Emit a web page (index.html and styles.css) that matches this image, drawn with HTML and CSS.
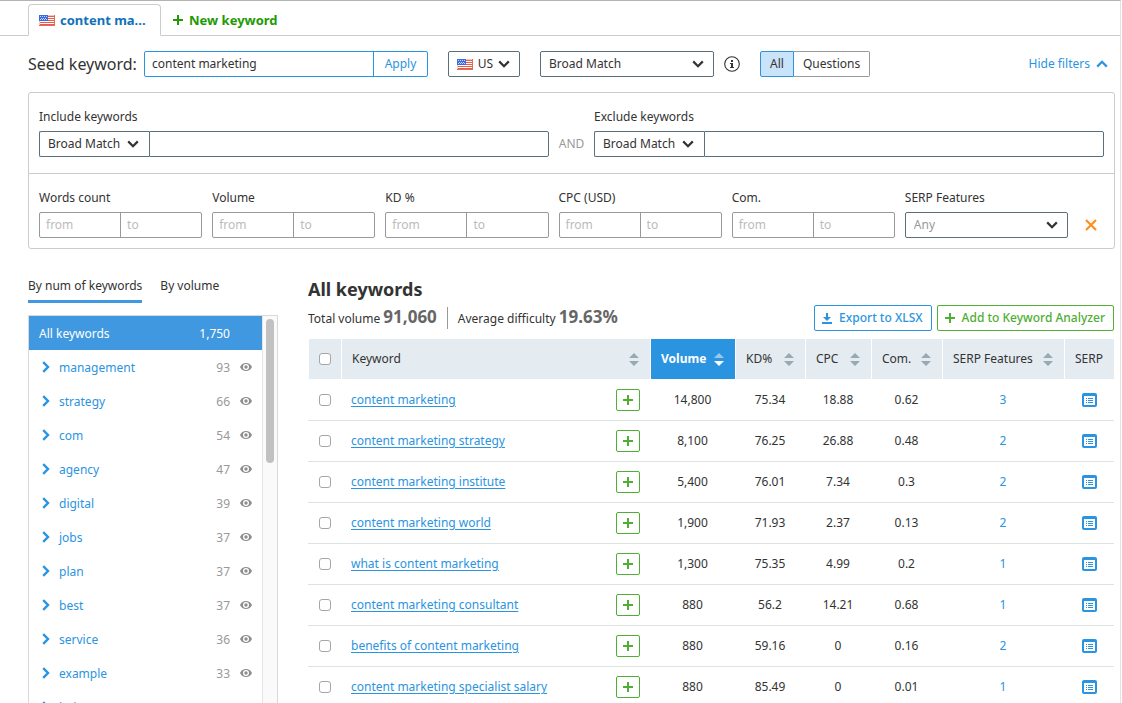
FILE: index.html
```html
<!DOCTYPE html>
<html lang="en">
<head>
  <meta charset="UTF-8">
  <title>Keyword Magic Tool</title>
  <link rel="stylesheet" href="styles.css">
</head>
<body>
  <!-- icons -->
  <svg class="sprite" aria-hidden="true">
    <symbol id="flag-us" viewBox="0 0 16 11">
      <path fill="#f4c9c2" d="M0 0h16v11H0z"/>
      <path fill="#fff" d="M1 1h14v9H1z"/>
      <path fill="#ee5a48" d="M1 1h14v1H1zM1 3h14v1H1zM1 5h14v1H1zM1 7h14v1H1zM1 9h14v1H1z"/>
      <path fill="#3c6be0" d="M0 0h9v6H0z"/>
      <path fill="#c5d6ff" d="M1 1h1v1H1zM3 1h1v1H3zM5 1h1v1H5zM7 1h1v1H7zM2 3h1v1H2zM4 3h1v1H4zM6 3h1v1H6zM1 4h1v1H1zM3 4h1v1H3zM5 4h1v1H5zM7 4h1v1H7z"/>
      <path fill="none" stroke="#d9705a" d="M0 10.5h16M15.5 0v11"/>
    </symbol>
    <symbol id="down" viewBox="0 0 12 8">
      <path fill="none" stroke="currentColor" stroke-width="2.2" d="M1.2 1.4L6 6.2l4.8-4.8"/>
    </symbol>
    <symbol id="up" viewBox="0 0 12 8">
      <path fill="none" stroke="currentColor" stroke-width="2.2" d="M1.2 6.6L6 1.8l4.8 4.8"/>
    </symbol>
    <symbol id="right" viewBox="0 0 8 12">
      <path fill="none" stroke="currentColor" stroke-width="2.4" d="M1.2 1.2L6 6l-4.800 4.800"/>
    </symbol>
    <symbol id="plus" viewBox="0 0 10 10">
      <path fill="currentColor" d="M4 0h2v4h4v2H6v4H4V6H0V4h4z"/>
    </symbol>
    <symbol id="close" viewBox="0 0 12 12">
      <path fill="none" stroke="currentColor" stroke-width="2.2" d="M1 1l10 10M11 1L1 11"/>
    </symbol>
    <symbol id="download" viewBox="0 0 10 11">
      <path fill="currentColor" d="M4 0h2v4h3L5 8 1 4h3zM0 9h10v2H0z"/>
    </symbol>
    <symbol id="info" viewBox="0 0 16 16">
      <circle cx="8" cy="8" r="7.3" fill="none" stroke="currentColor" stroke-width="1.1"/>
      <path fill="currentColor" d="M7 4h2v2H7zM6 7h3v4h1v1H6v-1h1V8H6z"/>
    </symbol>
    <symbol id="eye" viewBox="0 0 12 8">
      <path fill="currentColor" fill-rule="evenodd" d="M6 0c2.600 0 4.900 1.600 6 4-1.100 2.400-3.400 4-6 4S1.100 6.400 0 4c1.100-2.400 3.400-4 6-4zm0 1a3 3 0 1 0 0 6 3 3 0 0 0 0-6zm0 1.300a1.700 1.700 0 1 1 0 3.400 1.700 1.700 0 0 1 0-3.400z"/>
    </symbol>
    <symbol id="sort" viewBox="0 0 10 13">
      <path d="M5 0l5 5H0zM5 13l5-5H0z"/>
    </symbol>
    <symbol id="sort-desc" viewBox="0 0 10 13">
      <path fill-opacity="0.5" d="M5 0l5 5H0z"/>
      <path d="M5 13l5-5H0z"/>
    </symbol>
    <symbol id="serp" viewBox="0 0 15 14">
      <path fill="currentColor" fill-rule="evenodd" d="M2 0h11a2 2 0 0 1 2 2v10a2 2 0 0 1-2 2H2a2 2 0 0 1-2-2V2a2 2 0 0 1 2-2zm0 3v9h11V3zm2 2h1v1H4zm2 0h5v1H6zM4 7h1v1H4zm2 0h5v1H6zM4 9h1v1H4zm2 0h5v1H6z"/>
    </symbol>
  </svg>

  <div class="page">
    <nav class="tabs">
      <a href="#" class="tab active"><svg class="flag"><use href="#flag-us"/></svg>content ma...</a>
      <a href="#" class="tab new"><svg class="i-plus"><use href="#plus"/></svg>New keyword</a>
    </nav>

    <form class="search">
      <label class="search-label" for="seed">Seed keyword:</label>
      <div class="seed">
        <input type="text" id="seed" value="content marketing" autofocus>
        <button type="button">Apply</button>
      </div>
      <button type="button" class="country"><svg class="flag"><use href="#flag-us"/></svg>US<svg class="i-down"><use href="#down"/></svg></button>
      <div class="select match">
        <select aria-label="Match type"><option>Broad Match</option></select>
        <svg class="i-down"><use href="#down"/></svg>
      </div>
      <svg class="i-info"><use href="#info"/></svg>
      <div class="switch">
        <button type="button" class="on">All</button>
        <button type="button">Questions</button>
      </div>
      <a href="#" class="hide-filters">Hide filters<svg class="i-down"><use href="#up"/></svg></a>
    </form>

    <section class="filters">
      <div class="filters-row">
        <div class="field">
          <label for="include">Include keywords</label>
          <div class="combo">
            <div class="select">
              <select aria-label="Include match"><option>Broad Match</option></select>
              <svg class="i-down"><use href="#down"/></svg>
            </div>
            <input type="text" id="include">
          </div>
        </div>
        <span class="and">AND</span>
        <div class="field">
          <label for="exclude">Exclude keywords</label>
          <div class="combo">
            <div class="select">
              <select aria-label="Exclude match"><option>Broad Match</option></select>
              <svg class="i-down"><use href="#down"/></svg>
            </div>
            <input type="text" id="exclude">
          </div>
        </div>
      </div>
      <div class="filters-row ranges">
        <div class="field">
          <label for="words-from">Words count</label>
          <div class="range"><input type="text" id="words-from" placeholder="from"><input type="text" placeholder="to" aria-label="Words count to"></div>
        </div>
        <div class="field">
          <label for="volume-from">Volume</label>
          <div class="range"><input type="text" id="volume-from" placeholder="from"><input type="text" placeholder="to" aria-label="Volume to"></div>
        </div>
        <div class="field">
          <label for="kd-from">KD %</label>
          <div class="range"><input type="text" id="kd-from" placeholder="from"><input type="text" placeholder="to" aria-label="KD to"></div>
        </div>
        <div class="field">
          <label for="cpc-from">CPC (USD)</label>
          <div class="range"><input type="text" id="cpc-from" placeholder="from"><input type="text" placeholder="to" aria-label="CPC to"></div>
        </div>
        <div class="field">
          <label for="com-from">Com.</label>
          <div class="range"><input type="text" id="com-from" placeholder="from"><input type="text" placeholder="to" aria-label="Com. to"></div>
        </div>
        <div class="field">
          <label for="features">SERP Features</label>
          <div class="select any">
            <select id="features"><option>Any</option></select>
            <svg class="i-down"><use href="#down"/></svg>
          </div>
        </div>
        <button type="button" class="clear" aria-label="Clear filters"><svg><use href="#close"/></svg></button>
      </div>
    </section>

    <div class="main">
      <aside class="sidebar">
        <div class="group-by">
          <a href="#" class="active">By num of keywords</a>
          <a href="#">By volume</a>
        </div>
        <div class="groups">
          <ul>
            <li class="all"><a href="#">All keywords</a><span>1,750</span></li>
            <li><svg class="i-right"><use href="#right"/></svg><a href="#">management</a><span>93</span><svg class="i-eye"><use href="#eye"/></svg></li>
            <li><svg class="i-right"><use href="#right"/></svg><a href="#">strategy</a><span>66</span><svg class="i-eye"><use href="#eye"/></svg></li>
            <li><svg class="i-right"><use href="#right"/></svg><a href="#">com</a><span>54</span><svg class="i-eye"><use href="#eye"/></svg></li>
            <li><svg class="i-right"><use href="#right"/></svg><a href="#">agency</a><span>47</span><svg class="i-eye"><use href="#eye"/></svg></li>
            <li><svg class="i-right"><use href="#right"/></svg><a href="#">digital</a><span>39</span><svg class="i-eye"><use href="#eye"/></svg></li>
            <li><svg class="i-right"><use href="#right"/></svg><a href="#">jobs</a><span>37</span><svg class="i-eye"><use href="#eye"/></svg></li>
            <li><svg class="i-right"><use href="#right"/></svg><a href="#">plan</a><span>37</span><svg class="i-eye"><use href="#eye"/></svg></li>
            <li><svg class="i-right"><use href="#right"/></svg><a href="#">best</a><span>37</span><svg class="i-eye"><use href="#eye"/></svg></li>
            <li><svg class="i-right"><use href="#right"/></svg><a href="#">service</a><span>36</span><svg class="i-eye"><use href="#eye"/></svg></li>
            <li><svg class="i-right"><use href="#right"/></svg><a href="#">example</a><span>33</span><svg class="i-eye"><use href="#eye"/></svg></li>
            <li><svg class="i-right"><use href="#right"/></svg><a href="#">b2b</a><span>32</span><svg class="i-eye"><use href="#eye"/></svg></li>
          </ul>
          <div class="scrollbar"><div class="thumb"></div></div>
        </div>
      </aside>

      <section class="results">
        <h1>All keywords</h1>
        <div class="summary">
          <p>Total volume <b>91,060</b></p>
          <p>Average difficulty <b>19.63%</b></p>
          <div class="actions">
            <button type="button" class="export"><svg class="i-download"><use href="#download"/></svg>Export to XLSX</button>
            <button type="button" class="add"><svg class="i-plus"><use href="#plus"/></svg>Add to Keyword Analyzer</button>
          </div>
        </div>
        <table>
          <colgroup>
            <col class="c-check"><col><col class="c-volume"><col class="c-kd"><col class="c-cpc"><col class="c-com"><col class="c-features"><col class="c-serp">
          </colgroup>
          <thead>
            <tr>
              <th><input type="checkbox" aria-label="Select all"></th>
              <th><div class="head">Keyword<svg class="i-sort"><use href="#sort"/></svg></div></th>
              <th class="sorted"><div class="head">Volume<svg class="i-sort"><use href="#sort-desc"/></svg></div></th>
              <th><div class="head">KD%<svg class="i-sort"><use href="#sort"/></svg></div></th>
              <th><div class="head">CPC<svg class="i-sort"><use href="#sort"/></svg></div></th>
              <th><div class="head">Com.<svg class="i-sort"><use href="#sort"/></svg></div></th>
              <th><div class="head">SERP Features<svg class="i-sort"><use href="#sort"/></svg></div></th>
              <th><div class="head">SERP</div></th>
            </tr>
          </thead>
          <tbody>
            <tr>
              <td><input type="checkbox" aria-label="Select content marketing"></td>
              <td><div class="keyword"><a href="#">content marketing</a><button type="button" aria-label="Add"><svg class="i-plus"><use href="#plus"/></svg></button></div></td>
              <td>14,800</td><td>75.34</td><td>18.88</td><td>0.62</td><td><a href="#">3</a></td>
              <td><a href="#" aria-label="SERP"><svg class="i-serp"><use href="#serp"/></svg></a></td>
            </tr>
            <tr>
              <td><input type="checkbox" aria-label="Select content marketing strategy"></td>
              <td><div class="keyword"><a href="#">content marketing strategy</a><button type="button" aria-label="Add"><svg class="i-plus"><use href="#plus"/></svg></button></div></td>
              <td>8,100</td><td>76.25</td><td>26.88</td><td>0.48</td><td><a href="#">2</a></td>
              <td><a href="#" aria-label="SERP"><svg class="i-serp"><use href="#serp"/></svg></a></td>
            </tr>
            <tr>
              <td><input type="checkbox" aria-label="Select content marketing institute"></td>
              <td><div class="keyword"><a href="#">content marketing institute</a><button type="button" aria-label="Add"><svg class="i-plus"><use href="#plus"/></svg></button></div></td>
              <td>5,400</td><td>76.01</td><td>7.34</td><td>0.3</td><td><a href="#">2</a></td>
              <td><a href="#" aria-label="SERP"><svg class="i-serp"><use href="#serp"/></svg></a></td>
            </tr>
            <tr>
              <td><input type="checkbox" aria-label="Select content marketing world"></td>
              <td><div class="keyword"><a href="#">content marketing world</a><button type="button" aria-label="Add"><svg class="i-plus"><use href="#plus"/></svg></button></div></td>
              <td>1,900</td><td>71.93</td><td>2.37</td><td>0.13</td><td><a href="#">2</a></td>
              <td><a href="#" aria-label="SERP"><svg class="i-serp"><use href="#serp"/></svg></a></td>
            </tr>
            <tr>
              <td><input type="checkbox" aria-label="Select what is content marketing"></td>
              <td><div class="keyword"><a href="#">what is content marketing</a><button type="button" aria-label="Add"><svg class="i-plus"><use href="#plus"/></svg></button></div></td>
              <td>1,300</td><td>75.35</td><td>4.99</td><td>0.2</td><td><a href="#">1</a></td>
              <td><a href="#" aria-label="SERP"><svg class="i-serp"><use href="#serp"/></svg></a></td>
            </tr>
            <tr>
              <td><input type="checkbox" aria-label="Select content marketing consultant"></td>
              <td><div class="keyword"><a href="#">content marketing consultant</a><button type="button" aria-label="Add"><svg class="i-plus"><use href="#plus"/></svg></button></div></td>
              <td>880</td><td>56.2</td><td>14.21</td><td>0.68</td><td><a href="#">1</a></td>
              <td><a href="#" aria-label="SERP"><svg class="i-serp"><use href="#serp"/></svg></a></td>
            </tr>
            <tr>
              <td><input type="checkbox" aria-label="Select benefits of content marketing"></td>
              <td><div class="keyword"><a href="#">benefits of content marketing</a><button type="button" aria-label="Add"><svg class="i-plus"><use href="#plus"/></svg></button></div></td>
              <td>880</td><td>59.16</td><td>0</td><td>0.16</td><td><a href="#">2</a></td>
              <td><a href="#" aria-label="SERP"><svg class="i-serp"><use href="#serp"/></svg></a></td>
            </tr>
            <tr>
              <td><input type="checkbox" aria-label="Select content marketing specialist salary"></td>
              <td><div class="keyword"><a href="#">content marketing specialist salary</a><button type="button" aria-label="Add"><svg class="i-plus"><use href="#plus"/></svg></button></div></td>
              <td>880</td><td>85.49</td><td>0</td><td>0.01</td><td><a href="#">1</a></td>
              <td><a href="#" aria-label="SERP"><svg class="i-serp"><use href="#serp"/></svg></a></td>
            </tr>
          </tbody>
        </table>
      </section>
    </div>
  </div>
</body>
</html>
```
FILE: styles.css
```css
* {
  box-sizing: border-box;
}
body {
  margin: 0;
  font: 12px/18px "Noto Sans", sans-serif;
  color: #333;
  background: #fff;
}
a {
  color: #2b94e1;
  text-decoration: none;
}
button, input, select {
  font: inherit;
  color: inherit;
  margin: 0;
  padding: 0;
  border: 0;
  border-radius: 0;
  background: none;
  outline: none;
}
button {
  cursor: pointer;
}
svg {
  display: block;
  flex: none;
}
.sprite {
  position: absolute;
  width: 0;
  height: 0;
}
.page {
  display: flex;
  flex-direction: column;
  height: 100vh;
  margin-right: 1px;
  border-top: 1px solid #b3b3b3;
  border-right: 1px solid #e3e3e3;
  overflow: hidden;
}

/* icons */
.flag {
  width: 16px;
  height: 11px;
}
.i-down {
  width: 12px;
  height: 8px;
}
.i-right {
  width: 8px;
  height: 12px;
  color: #2b94e1;
}
.i-plus {
  width: 10px;
  height: 10px;
}
.i-download {
  width: 10px;
  height: 11px;
}
.i-info {
  width: 16px;
  height: 16px;
}
.i-eye {
  width: 12px;
  height: 8px;
  color: #8e8e8e;
}
.i-sort {
  width: 10px;
  height: 13px;
  fill: #98a9b0;
}
.i-serp {
  width: 15px;
  height: 14px;
  margin: 0 auto;
}

/* tabs */
.tabs {
  display: flex;
  flex: none;
  align-items: flex-end;
  height: 35px;
  padding-left: 28px;
  border-bottom: 1px solid #ccc;
}
.tab {
  display: flex;
  align-items: center;
  gap: 5px;
  height: 32px;
  margin-bottom: -1px;
  padding: 0 10px;
  border: 1px solid transparent;
  font-size: 13px;
  font-weight: bold;
  white-space: nowrap;
  color: #0f71bb;
}
.tab.active {
  width: 133px;
  border-color: #ccc;
  border-bottom-color: #fff;
  border-radius: 4px 4px 0 0;
  background: #fff;
}
.tab.new {
  gap: 6px;
  padding-left: 11px;
  color: #229a04;
}

/* seed keyword */
.search {
  display: flex;
  flex: none;
  align-items: center;
  padding: 15px 12px 15px 28px;
}
.search-label {
  width: 116px;
  font-size: 16px;
  white-space: nowrap;
}
.seed {
  display: flex;
  width: 284px;
  height: 26px;
  border: 1px solid #2b94e1;
  border-radius: 2px;
}
.seed input {
  flex: 1;
  min-width: 0;
  padding: 0 7px;
}
.seed button {
  width: 54px;
  border-left: 1px solid #2b94e1;
  color: #2b94e1;
}
.country {
  display: flex;
  align-items: center;
  justify-content: space-between;
  width: 72px;
  height: 26px;
  margin: 0 20px;
  padding: 0 9px 0 8px;
  border: 1px solid #5b707b;
  border-radius: 2px;
}
.select {
  position: relative;
  height: 26px;
}
.select select {
  width: 100%;
  height: 26px;
  padding: 0 8px;
  border: 1px solid #5b707b;
  border-radius: 2px;
  appearance: none;
}
.select .i-down {
  position: absolute;
  top: 9px;
  right: 10px;
  pointer-events: none;
}
.match {
  width: 174px;
  margin-right: 10px;
}
.switch {
  display: flex;
  margin-left: 20px;
}
.switch button {
  height: 26px;
  padding: 0 9px;
  border: 1px solid #999;
  border-left: 0;
  border-radius: 0 2px 2px 0;
}
.switch .on {
  width: 34px;
  padding: 0;
  border: 1px solid #2b94e1;
  border-radius: 2px 0 0 2px;
  background: #c9e3f8;
}
.hide-filters {
  display: flex;
  align-items: center;
  gap: 6px;
  margin-left: auto;
}

/* filters */
.filters {
  flex: none;
  margin: 0 5px 0 28px;
  border: 1px solid #ccc;
  border-radius: 3px;
}
.filters-row {
  display: flex;
  align-items: flex-end;
  padding: 15px 10px 16px;
}
.ranges {
  gap: 10px;
  padding-bottom: 10px;
  border-top: 1px solid #ccc;
}
.field {
  flex: 1;
  min-width: 0;
}
.field label {
  display: block;
  margin-bottom: 5px;
}
.combo {
  display: flex;
}
.combo .select {
  width: 110px;
}
.combo select {
  border-radius: 2px 0 0 2px;
  border-right: 0;
}
.combo input {
  flex: 1;
  min-width: 0;
  height: 26px;
  padding: 0 8px;
  border: 1px solid #5b707b;
  border-radius: 0 2px 2px 0;
}
.and {
  width: 45px;
  line-height: 26px;
  text-align: center;
  color: #999;
}
.range {
  display: flex;
  height: 26px;
  border: 1px solid #999;
  border-radius: 2px;
}
.range input {
  flex: 1;
  min-width: 0;
  padding: 0 6px;
}
.range input + input {
  border-left: 1px solid #999;
}
.range input::placeholder {
  color: #bbb;
}
.any select {
  color: #999;
}
.clear {
  width: 26px;
  height: 26px;
  padding: 7px;
  color: #ff8f1c;
}
.clear svg {
  width: 12px;
  height: 12px;
}

/* keyword groups */
.main {
  display: flex;
  flex: 1;
  gap: 30px;
  min-height: 0;
  padding: 27px 6px 0 28px;
}
.sidebar {
  display: flex;
  flex: none;
  flex-direction: column;
  width: 250px;
}
.group-by {
  display: flex;
  gap: 18px;
  margin-bottom: 12px;
}
.group-by a {
  padding: 1px 0 5px;
  border-bottom: 3px solid transparent;
  color: #333;
}
.group-by .active {
  border-color: #3f98e0;
}
.groups {
  display: flex;
  flex: 1;
  min-height: 0;
  border: 1px solid #d9d9d9;
  border-bottom: 0;
  overflow: hidden;
}
.groups ul {
  flex: 1;
  margin: 0;
  padding: 0;
  list-style: none;
}
.groups li {
  display: flex;
  align-items: center;
  height: 34px;
  padding: 0 10px 0 13px;
}
.groups li a {
  flex: 1;
  margin-left: 9px;
}
.groups li a, .groups li span {
  padding-top: 2px;
}
.groups li span {
  color: #999;
}
.i-eye {
  margin-left: 10px;
}
.groups .all {
  padding: 0 32px 0 10px;
  background: #3f98e0;
}
.groups .all a {
  margin: 0;
}
.groups .all a, .groups .all span {
  color: #fff;
}
.scrollbar {
  width: 15px;
  padding: 3px;
  border-left: 1px solid #e6e6e6;
  background: #fafafa;
}
.thumb {
  width: 8px;
  height: 144px;
  border-radius: 4px;
  background: #c1c1c1;
}

/* results */
.results {
  flex: 1;
  min-width: 0;
}
h1 {
  margin: 0 0 3px;
  font-size: 18px;
  line-height: 26px;
}
.summary {
  display: flex;
  align-items: center;
  height: 26px;
  margin-bottom: 8px;
}
.summary p {
  margin: 0;
  line-height: 20px;
}
.summary p + p {
  margin-left: 10px;
  padding-left: 10px;
  border-left: 1px solid #999;
}
.summary b {
  font-size: 17px;
  color: #666;
}
.actions {
  display: flex;
  gap: 5px;
  margin-left: auto;
}
.actions button {
  display: flex;
  align-items: center;
  gap: 7px;
  height: 26px;
  padding: 0 8px 0 7px;
  border: 1px solid;
  border-radius: 2px;
  font-weight: 500;
}
.export {
  color: #2b94e1;
}
.add {
  color: #4fae33;
}
table {
  width: 100%;
  table-layout: fixed;
  border-collapse: separate;
  border-spacing: 0;
}
.c-check { width: 33px; }
.c-volume { width: 85px; }
.c-kd { width: 70px; }
.c-cpc { width: 66px; }
.c-com { width: 71px; }
.c-features { width: 122px; }
.c-serp { width: 50px; }
th {
  height: 41px;
  padding: 0;
  border-left: 1px solid #fff;
  border-bottom: 1px solid #fff;
  background: #e4ebf1;
  font-weight: normal;
}
.head {
  display: flex;
  align-items: center;
  justify-content: space-between;
  padding: 0 11px 0 10px;
  white-space: nowrap;
}
.sorted {
  background: #2b94e1;
  color: #fff;
  font-weight: bold;
}
.sorted .i-sort {
  fill: #fff;
}
td {
  height: 41px;
  padding: 0;
  border-bottom: 1px solid #dde3e3;
  text-align: center;
}
.keyword {
  display: flex;
  align-items: center;
  justify-content: space-between;
  padding: 0 10px;
}
.keyword a {
  text-decoration: underline;
  text-underline-offset: 2px;
}
.keyword button {
  display: flex;
  align-items: center;
  justify-content: center;
  width: 24px;
  height: 22px;
  border: 1px solid #4fae33;
  border-radius: 2px;
  color: #4fae33;
}
input[type=checkbox] {
  display: block;
  width: 12px;
  height: 12px;
  margin: 0 auto;
  border: 1px solid #a6a6a6;
  border-radius: 3px;
  background: #fff;
  appearance: none;
}
```
